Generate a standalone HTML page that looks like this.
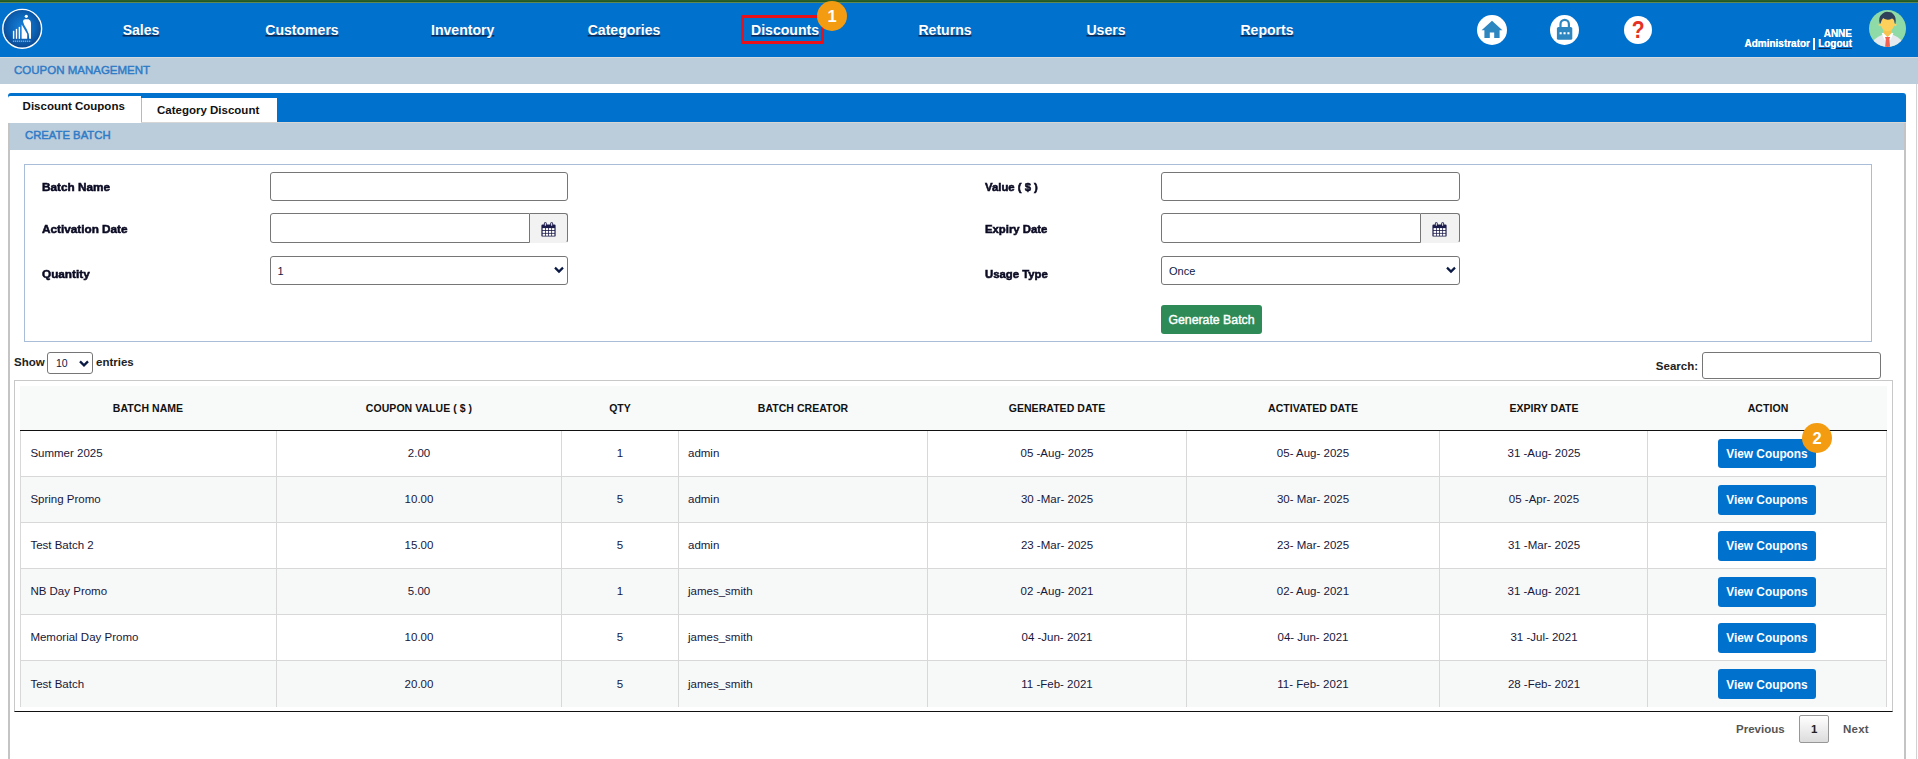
<!DOCTYPE html>
<html><head><meta charset="utf-8">
<style>
*{box-sizing:border-box;margin:0;padding:0}
html,body{width:1918px;height:759px;overflow:hidden;background:#fff;font-family:"Liberation Sans",sans-serif;color:#111}
.abs{position:absolute}
#top{left:0;top:0;width:1918px;height:3px;background:linear-gradient(#2a5e2a 0,#2a5e2a 1px,#1f5925 1px,#1f5925 2px,#5e8752 2px,#5e8752 3px)}
#nav{left:0;top:3px;width:1918px;height:54px;background:#0072ce}
.nl{position:absolute;top:21px;height:18px;line-height:18px;font-weight:bold;font-size:14.05px;color:#fff;text-decoration:underline;text-decoration-color:#0b2a55;text-decoration-thickness:1.4px;text-underline-offset:.4px;text-shadow:0 1px 0 rgba(10,40,90,.55);white-space:nowrap;transform:translateX(-50%)}
#band1{left:0;top:57px;width:1918px;height:27px;background:#bbccdb;border-top:1px solid #d3d9de}
.ut{font-weight:bold;font-size:10px;color:#fff;white-space:nowrap;line-height:11px;text-align:right;text-shadow:0 0 .5px #fff}
.bt{position:absolute;font-size:11.5px;color:#2f7bc6;white-space:nowrap;-webkit-text-stroke:.45px #2f7bc6}
#tabbar{left:8px;top:93px;width:1898px;height:30px;background:#0072ce;border-radius:3px 3px 0 0;border-bottom:1px solid #d6d6d6}
#tab1{left:8px;top:96px;width:133px;height:27px;background:#fff;border-radius:2px 0 0 0}
#tab2{left:141px;top:98px;width:136px;height:24px;background:#fff;border-left:1px solid #b9b9b9}
.tt{position:absolute;font-weight:bold;font-size:11.5px;color:#111;white-space:nowrap}
#band2{left:9px;top:123px;width:1896px;height:27px;background:#bbccdb}
#lb{left:8.2px;top:123px;width:1.6px;height:640px;background:#c4c4c4}
#rb{left:1904.2px;top:123px;width:1.6px;height:640px;background:#c4c4c4}
#fs{left:24px;top:164px;width:1848px;height:178px;border:1px solid #a9bdd8}
.lab{position:absolute;font-weight:bold;font-size:10.7px;line-height:14px;color:#0b0b24;white-space:nowrap;-webkit-text-stroke:.5px #0b0b24;margin-top:0;margin-left:.9px;transform:scaleX(1.1);transform-origin:0 0}
.inp{position:absolute;background:#fff;border:1px solid #767676;border-radius:3px}
.calb{position:absolute;background:#f2f2f2;border:1px solid #767676;border-left:none;border-bottom-color:#f2f2f2;border-radius:0 3px 3px 0}
.seltxt{position:absolute;font-size:11px;color:#111;white-space:nowrap}
#gen{left:1161px;top:305px;width:101px;height:29px;background:#2e8b57;border-radius:3px;color:#fff;font-size:12.3px;text-align:center;line-height:30.5px;-webkit-text-stroke:.4px #fff}
.sm{position:absolute;font-weight:bold;font-size:11.5px;color:#222;white-space:nowrap}
#tw{left:14px;top:380px;width:1879px;height:332px;border:1px solid #c8c8c8;border-bottom:1px solid #111}
#thead{left:20px;top:386px;width:1867px;height:45px;background:#f8f9f9;border-bottom:1px solid #111}
.th{position:absolute;top:402px;font-weight:bold;font-size:10.5px;color:#111;white-space:nowrap;transform:translateX(-50%);letter-spacing:.05px}
.row{position:absolute;left:20px;width:1867px;height:46px;border-bottom:1px solid #d8d8d8;border-left:1px solid #d8d8d8;border-right:1px solid #d8d8d8}
.row.alt{background:#f7f9f9}
.vl{position:absolute;top:431px;width:1px;height:276px;background:#d8d8d8}
.td{position:absolute;font-size:11.5px;color:#17173a;white-space:nowrap}
.tdc{transform:translateX(-50%)}
.vc{position:absolute;left:1718px;width:98px;height:29.5px;background:#0072ce;border-radius:3px;color:#fff;font-weight:bold;font-size:11.85px;text-align:center;line-height:30.4px;white-space:nowrap}
.badge{position:absolute;width:30px;height:30px;border-radius:50%;background:#f39c12;color:#fff;font-weight:bold;font-size:16.5px;text-align:center;line-height:30px}
.pg{position:absolute;font-weight:bold;font-size:12px;color:#555;white-space:nowrap}
</style></head><body>
<div class="abs" id="top"></div>
<div class="abs" id="nav"></div>
<!-- logo -->
<svg class="abs" style="left:1px;top:8px" width="43" height="43" viewBox="0 0 43 43">
<defs><radialGradient id="lg" cx="50%" cy="45%" r="55%"><stop offset="0" stop-color="#1580d8"/><stop offset=".6" stop-color="#0c63b6"/><stop offset="1" stop-color="#0a4690"/></radialGradient></defs>
<circle cx="21.2" cy="20.8" r="19.4" fill="url(#lg)" stroke="#fff" stroke-width="1.4"/>
<rect x="11.9" y="22.8" width="1.4" height="8" fill="#fff"/>
<rect x="14.8" y="20.9" width="1.4" height="9.9" fill="#fff"/>
<rect x="17.7" y="18.9" width="1.4" height="11.9" fill="#fff"/>
<path d="M20.6 16.5 L20.6 30.8 L26.2 30.8 L26.2 26 Z" fill="#fff"/>
<path d="M22 13.6 Q22 11.2 24.2 11.2 L27.6 11.2 Q30 12.4 30 15 L30 30.8 L28.2 30.8 Q28.6 26 25.6 21 Q22.6 16.6 22 13.6 Z" fill="#fff"/>
<circle cx="25.3" cy="8.3" r="1.6" fill="#fff"/>
<line x1="11.9" y1="33.3" x2="30.1" y2="33.3" stroke="#8bbbe8" stroke-width="1.5" stroke-dasharray="1.3 .7" opacity=".75"/>
</svg>
<div class="nl" style="left:141px">Sales</div>
<div class="nl" style="left:302px">Customers</div>
<div class="nl" style="left:462.7px">Inventory</div>
<div class="nl" style="left:624px">Categories</div>
<div class="nl" style="left:785px">Discounts</div>
<div class="nl" style="left:945px">Returns</div>
<div class="nl" style="left:1106px">Users</div>
<div class="nl" style="left:1267px">Reports</div>
<div class="abs" style="left:741px;top:14.5px;width:83px;height:29px;border:3px solid #e8111a;border-radius:1px"></div>
<div class="badge" style="left:817px;top:1px">1</div>
<!-- icons -->
<svg class="abs" style="left:1477px;top:15px" width="30" height="30" viewBox="0 0 30 30"><circle cx="15" cy="15" r="15" fill="#fff"/><path d="M15 5.8 L25.4 15.2 L22.6 15.2 L22.6 23 L17.2 23 L17.2 17.6 L12.8 17.6 L12.8 23 L7.4 23 L7.4 15.2 L4.6 15.2 Z" fill="#2e86c1"/></svg>
<svg class="abs" style="left:1550px;top:15px" width="29" height="30" viewBox="0 0 29 30"><ellipse cx="14.5" cy="15" rx="14.5" ry="15" fill="#fff"/><path d="M10.5 13 V9.2 A4.2 4.4 0 0 1 18.9 9.2 V13" fill="none" stroke="#2e86c1" stroke-width="2.2"/><rect x="6.9" y="11.9" width="15.4" height="12.9" rx="1.6" fill="#2e86c1"/><rect x="9.6" y="17.2" width="2.1" height="2.1" fill="#fff"/><rect x="13.5" y="17.2" width="2.1" height="2.1" fill="#fff"/><rect x="17.4" y="17.2" width="2.1" height="2.1" fill="#fff"/></svg>
<svg class="abs" style="left:1624px;top:16px" width="28" height="28" viewBox="0 0 28 28"><circle cx="14" cy="14" r="14" fill="#fff"/><text transform="translate(14.2,22.2) scale(1,1.17)" x="0" y="0" text-anchor="middle" font-family="Liberation Sans" font-weight="bold" font-size="21" fill="#e53224">?</text></svg>
<div class="abs ut" style="right:66px;top:28px">ANNE</div>
<div class="abs ut" style="right:108px;top:38px">Administrator</div>
<div class="abs" style="left:1813.4px;top:37.6px;width:1.8px;height:12px;background:#fff"></div>
<div class="abs ut" style="right:66px;top:38px;text-decoration:underline;text-decoration-color:#0b2a55">Logout</div>
<!-- avatar -->
<svg class="abs" style="left:1869px;top:10px" width="37" height="37" viewBox="0 0 37 37"><defs><clipPath id="ac"><circle cx="18.5" cy="18.5" r="18.5"/></clipPath></defs><circle cx="18.5" cy="18.5" r="18.5" fill="#8fdba8"/><g clip-path="url(#ac)"><path d="M1.5 37 Q3 28.8 12.8 25 L24.4 25 Q34 28.8 35.5 37 Z" fill="#e6e9ee"/><path d="M14.1 18 L23 18 L23 24.2 L18.55 28 L14.1 24.2 Z" fill="#f6c350"/><path d="M12.7 23.2 L14.2 22.8 L18.55 27.2 L15.6 30.2 Z M24.4 23.2 L22.9 22.8 L18.55 27.2 L21.5 30.2 Z" fill="#fff"/><path d="M16 26.9 L21.2 26.9 L20.3 29.2 L21.1 37 L16.1 37 L16.9 29.2 Z" fill="#f26052"/><circle cx="10.9" cy="14.8" r="1.4" fill="#fdd05c"/><circle cx="26.2" cy="14.8" r="1.4" fill="#fdd05c"/><ellipse cx="18.55" cy="13.6" rx="6.9" ry="7.6" fill="#fdd05c"/><path d="M10.9 14.2 Q8.6 7.4 13.4 3.8 Q16 1.2 19.6 2 Q22.6 1.8 24.6 4.4 Q27.8 7.4 26.3 14.2 Q25.4 12.6 25.2 10.4 Q24.2 8.6 23 8.4 Q20.4 10 17.6 9.6 Q15.4 9.2 14.2 8 Q12.6 9.6 11.9 12.4 Z" fill="#2f4259"/></g></svg>

<div class="abs" id="band1"></div>
<div class="bt" style="left:14px;top:64px">COUPON MANAGEMENT</div>
<div class="abs" id="tabbar"></div>
<div class="abs" id="tab1"></div>
<div class="abs" id="tab2"></div>
<div class="tt" style="left:22.6px;top:100px">Discount Coupons</div>
<div class="tt" style="left:157px;top:104px">Category Discount</div>
<div class="abs" id="band2"></div>
<div class="bt" style="left:25px;top:129px;font-size:11.3px">CREATE BATCH</div>
<div class="abs" id="lb"></div>
<div class="abs" style="left:1916px;top:84px;width:1px;height:680px;background:#d2d2d2"></div>
<div class="abs" id="rb"></div>
<div class="abs" id="fs"></div>

<div class="lab" style="left:41px;top:180px">Batch Name</div>
<div class="lab" style="left:41px;top:222px">Activation Date</div>
<div class="lab" style="left:41px;top:267px">Quantity</div>
<div class="lab" style="left:984.6px;top:180px;transform:scaleX(1.06)">Value ( $ )</div>
<div class="lab" style="left:984.6px;top:222px;transform:scaleX(1.06)">Expiry Date</div>
<div class="lab" style="left:984.6px;top:267px;transform:scaleX(1.06)">Usage Type</div>

<div class="inp" style="left:270px;top:172px;width:298px;height:29px"></div>
<div class="inp" style="left:270px;top:213px;width:260px;height:30px;border-radius:3px 0 0 3px"></div>
<div class="calb" style="left:530px;top:213px;width:38px;height:30px"></div>
<div class="inp" style="left:270px;top:256px;width:298px;height:29px"></div>
<div class="seltxt" style="left:277.6px;top:265px;color:#0b1a44">1</div>

<div class="inp" style="left:1161px;top:172px;width:299px;height:29px"></div>
<div class="inp" style="left:1161px;top:213px;width:260px;height:30px;border-radius:3px 0 0 3px"></div>
<div class="calb" style="left:1421px;top:213px;width:39px;height:30px"></div>
<div class="inp" style="left:1161px;top:256px;width:299px;height:29px"></div>
<div class="seltxt" style="left:1169px;top:265px;color:#0b1a44">Once</div>

<svg class="abs" style="left:541px;top:221.6px" width="15" height="15" viewBox="0 0 15 15"><g id="cal"><rect x="0.4" y="2.6" width="14.2" height="12" rx="1.2" fill="#1b1b4b"/><rect x="2.9" y="0.2" width="2.8" height="4.6" rx="1.3" fill="#1b1b4b"/><rect x="3.8" y="1.1" width="1" height="2.6" rx=".5" fill="#fff"/><rect x="9.3" y="0.2" width="2.8" height="4.6" rx="1.3" fill="#1b1b4b"/><rect x="10.2" y="1.1" width="1" height="2.6" rx=".5" fill="#fff"/><g fill="#fff"><rect x="1.6" y="6.1" width="2.4" height="2.0"/><rect x="4.75" y="6.1" width="2.4" height="2.0"/><rect x="7.9" y="6.1" width="2.4" height="2.0"/><rect x="11.05" y="6.1" width="2.4" height="2.0"/><rect x="1.6" y="8.9" width="2.4" height="2.0"/><rect x="4.75" y="8.9" width="2.4" height="2.0"/><rect x="7.9" y="8.9" width="2.4" height="2.0"/><rect x="11.05" y="8.9" width="2.4" height="2.0"/><rect x="1.6" y="11.7" width="2.4" height="2.0"/><rect x="4.75" y="11.7" width="2.4" height="2.0"/><rect x="7.9" y="11.7" width="2.4" height="2.0"/><rect x="11.05" y="11.7" width="2.4" height="2.0"/></g></g></svg>
<svg class="abs" style="left:1432px;top:221.6px" width="15" height="15" viewBox="0 0 15 15"><use href="#cal"/></svg>
<svg class="abs" style="left:554px;top:266px" width="10" height="8" viewBox="0 0 10 8"><path d="M1 1.6 L5 5.6 L9 1.6" fill="none" stroke="#0b1a44" stroke-width="2.2"/></svg>
<svg class="abs" style="left:1446px;top:266px" width="10" height="8" viewBox="0 0 10 8"><path d="M1 1.6 L5 5.6 L9 1.6" fill="none" stroke="#0b1a44" stroke-width="2.2"/></svg>
<div class="abs" id="gen">Generate Batch</div>

<div class="sm" style="left:14px;top:356px">Show</div>
<div class="inp" style="left:47px;top:352px;width:46px;height:22px"></div>
<div class="seltxt" style="left:56px;top:357px;font-size:10.5px;color:#0b1a44">10</div>
<svg class="abs" style="left:79px;top:359.5px" width="10" height="8" viewBox="0 0 10 8"><path d="M1 1.4 L5 5.4 L9 1.4" fill="none" stroke="#0b1a44" stroke-width="2.3"/></svg>
<div class="sm" style="left:96px;top:356px">entries</div>
<div class="sm" style="right:220px;top:360px">Search:</div>
<div class="inp" style="left:1702px;top:352px;width:179px;height:27px"></div>

<div class="abs" id="tw"></div>
<div class="abs" id="thead"></div>
<div class="th" style="left:148px">BATCH NAME</div>
<div class="th" style="left:419px">COUPON VALUE ( $ )</div>
<div class="th" style="left:620px">QTY</div>
<div class="th" style="left:803px">BATCH CREATOR</div>
<div class="th" style="left:1057px">GENERATED DATE</div>
<div class="th" style="left:1313px">ACTIVATED DATE</div>
<div class="th" style="left:1544px">EXPIRY DATE</div>
<div class="th" style="left:1768px">ACTION</div>
<!--ROWS-->
<div class="row" style="top:431px;height:46px"></div>
<div class="row alt" style="top:477px;height:46px"></div>
<div class="row" style="top:523px;height:46px"></div>
<div class="row alt" style="top:569px;height:46px"></div>
<div class="row" style="top:615px;height:46px"></div>
<div class="row alt" style="top:661px;height:46px;border-bottom:none"></div>
<div class="vl" style="left:276px"></div>
<div class="vl" style="left:561px"></div>
<div class="vl" style="left:678px"></div>
<div class="vl" style="left:927px"></div>
<div class="vl" style="left:1186px"></div>
<div class="vl" style="left:1439px"></div>
<div class="vl" style="left:1647px"></div>
<div class="td" style="left:30.4px;top:447px">Summer 2025</div>
<div class="td tdc" style="left:419px;top:447px">2.00</div>
<div class="td tdc" style="left:620px;top:447px">1</div>
<div class="td" style="left:688px;top:447px">admin</div>
<div class="td tdc" style="left:1057px;top:447px">05 -Aug- 2025</div>
<div class="td tdc" style="left:1313px;top:447px">05- Aug- 2025</div>
<div class="td tdc" style="left:1544px;top:447px">31 -Aug- 2025</div>
<div class="vc" style="top:439px;height:29px;line-height:31.6px">View Coupons</div>
<div class="td" style="left:30.4px;top:493px">Spring Promo</div>
<div class="td tdc" style="left:419px;top:493px">10.00</div>
<div class="td tdc" style="left:620px;top:493px">5</div>
<div class="td" style="left:688px;top:493px">admin</div>
<div class="td tdc" style="left:1057px;top:493px">30 -Mar- 2025</div>
<div class="td tdc" style="left:1313px;top:493px">30- Mar- 2025</div>
<div class="td tdc" style="left:1544px;top:493px">05 -Apr- 2025</div>
<div class="vc" style="top:485px">View Coupons</div>
<div class="td" style="left:30.4px;top:539px">Test Batch 2</div>
<div class="td tdc" style="left:419px;top:539px">15.00</div>
<div class="td tdc" style="left:620px;top:539px">5</div>
<div class="td" style="left:688px;top:539px">admin</div>
<div class="td tdc" style="left:1057px;top:539px">23 -Mar- 2025</div>
<div class="td tdc" style="left:1313px;top:539px">23- Mar- 2025</div>
<div class="td tdc" style="left:1544px;top:539px">31 -Mar- 2025</div>
<div class="vc" style="top:531px">View Coupons</div>
<div class="td" style="left:30.4px;top:585px">NB Day Promo</div>
<div class="td tdc" style="left:419px;top:585px">5.00</div>
<div class="td tdc" style="left:620px;top:585px">1</div>
<div class="td" style="left:688px;top:585px">james_smith</div>
<div class="td tdc" style="left:1057px;top:585px">02 -Aug- 2021</div>
<div class="td tdc" style="left:1313px;top:585px">02- Aug- 2021</div>
<div class="td tdc" style="left:1544px;top:585px">31 -Aug- 2021</div>
<div class="vc" style="top:577px">View Coupons</div>
<div class="td" style="left:30.4px;top:631px">Memorial Day Promo</div>
<div class="td tdc" style="left:419px;top:631px">10.00</div>
<div class="td tdc" style="left:620px;top:631px">5</div>
<div class="td" style="left:688px;top:631px">james_smith</div>
<div class="td tdc" style="left:1057px;top:631px">04 -Jun- 2021</div>
<div class="td tdc" style="left:1313px;top:631px">04- Jun- 2021</div>
<div class="td tdc" style="left:1544px;top:631px">31 -Jul- 2021</div>
<div class="vc" style="top:623px">View Coupons</div>
<div class="td" style="left:30.4px;top:678px">Test Batch</div>
<div class="td tdc" style="left:419px;top:678px">20.00</div>
<div class="td tdc" style="left:620px;top:678px">5</div>
<div class="td" style="left:688px;top:678px">james_smith</div>
<div class="td tdc" style="left:1057px;top:678px">11 -Feb- 2021</div>
<div class="td tdc" style="left:1313px;top:678px">11- Feb- 2021</div>
<div class="td tdc" style="left:1544px;top:678px">28 -Feb- 2021</div>
<div class="vc" style="top:669px;line-height:32px">View Coupons</div>
<div class="badge" style="left:1802px;top:423px">2</div>
<!--/ROWS-->
<div class="pg" style="left:1736px;top:722px;font-size:11.5px;line-height:14px">Previous</div>
<div class="abs" style="left:1799px;top:715px;width:30px;height:28px;border:1px solid #979797;border-radius:2px;background:linear-gradient(#fff,#dcdcdc)"></div>
<div class="pg" style="left:1811px;top:722px;color:#222;font-size:11.5px;line-height:14px">1</div>
<div class="pg" style="left:1843px;top:722px;font-size:11.5px;line-height:14px;letter-spacing:.25px">Next</div>
</body></html>
